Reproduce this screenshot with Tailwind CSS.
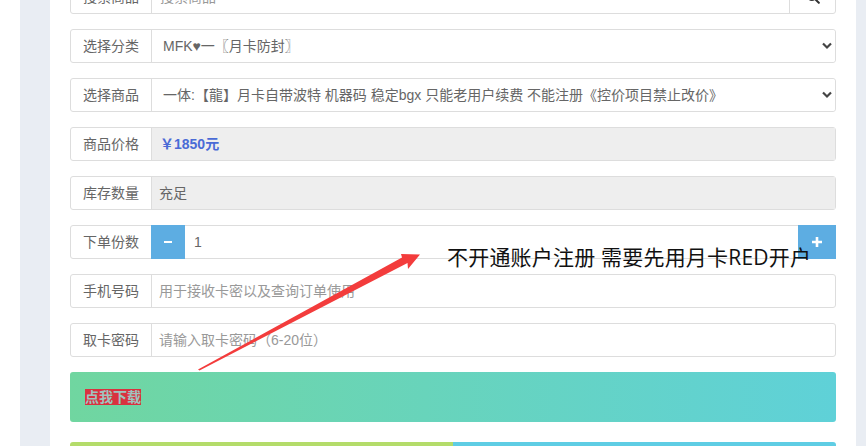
<!DOCTYPE html>
<html lang="zh-CN">

<head>
  <meta charset="UTF-8" />
  <meta name="viewport" content="width=device-width, initial-scale=1.0" />
  <title>商品下单</title>
  <script src="https://cdn.jsdelivr.net/npm/@tailwindcss/browser@4"></script>
</head>

<body class="bg-white h-[446px] overflow-hidden relative font-['Liberation_Sans','Noto_Sans_CJK_SC',sans-serif] text-sm text-[#666]">
  <div class="ml-5 mr-0 h-[446px] bg-[#e9edf3] px-[30px] pr-[10px]">
    <div class="bg-white h-[446px] px-5 overflow-hidden">
      <div class="-mt-5 flex flex-col gap-[15px]">

        <!-- Search -->
        <div class="flex h-[34px] border border-[#ddd] rounded-[3px]">
          <span class="w-[81px] shrink-0 border-r border-[#ddd] flex items-center justify-center">搜索商品</span>
          <input class="flex-1 min-w-0 px-2 outline-none placeholder:text-[#999]" placeholder="搜索商品" />
          <button class="w-[46px] border-l border-[#ddd] flex items-center justify-center">
            <svg class="w-[14px] h-[14px]" viewBox="0 0 24 24" fill="none" stroke="#333" stroke-width="3.5" stroke-linecap="round">
              <circle cx="10" cy="10" r="7" />
              <path d="M15.5 15.5 22 22" />
            </svg>
          </button>
        </div>

        <!-- Category -->
        <div class="flex h-[34px] border border-[#ddd] rounded-[3px]">
          <span class="w-[81px] shrink-0 border-r border-[#ddd] flex items-center justify-center">选择分类</span>
          <div class="flex-1 relative">
            <select class="w-full h-full appearance-none pl-[11px] outline-none bg-white rounded-[3px]">
              <option>MFK♥一〖月卡防封〗</option>
            </select>
            <svg class="absolute right-[3px] top-[12px] w-[10px] h-[8px] pointer-events-none" viewBox="0 0 10 8" fill="none" stroke="#444" stroke-width="2.2">
              <path d="M1 1.5 5 5.5 9 1.5" />
            </svg>
          </div>
        </div>

        <!-- Product -->
        <div class="flex h-[34px] border border-[#ddd] rounded-[3px]">
          <span class="w-[81px] shrink-0 border-r border-[#ddd] flex items-center justify-center">选择商品</span>
          <div class="flex-1 relative">
            <select class="w-full h-full appearance-none pl-[11px] outline-none bg-white rounded-[3px]">
              <option>一体:【龍】月卡自带波特 机器码 稳定bgx 只能老用户续费 不能注册《控价项目禁止改价》</option>
            </select>
            <svg class="absolute right-[3px] top-[12px] w-[10px] h-[8px] pointer-events-none" viewBox="0 0 10 8" fill="none" stroke="#444" stroke-width="2.2">
              <path d="M1 1.5 5 5.5 9 1.5" />
            </svg>
          </div>
        </div>

        <!-- Price -->
        <div class="flex h-[34px] border border-[#ddd] rounded-[3px]">
          <span class="w-[81px] shrink-0 border-r border-[#ddd] flex items-center justify-center">商品价格</span>
          <div class="flex-1 bg-[#eee] flex items-center pl-2 font-bold text-[#4a6bd6]">￥1850元</div>
        </div>

        <!-- Stock -->
        <div class="flex h-[34px] border border-[#ddd] rounded-[3px]">
          <span class="w-[81px] shrink-0 border-r border-[#ddd] flex items-center justify-center">库存数量</span>
          <div class="flex-1 bg-[#eee] flex items-center pl-[7px]">充足</div>
        </div>

        <!-- Quantity -->
        <div class="flex h-[34px] border border-[#ddd] rounded-[3px]">
          <span class="w-[80px] shrink-0 flex items-center justify-center">下单份数</span>
          <button class="w-[34px] -my-px bg-[#5dade2] text-white font-bold flex items-center justify-center">
            <span class="w-2 h-0.5 bg-white"></span>
          </button>
          <input class="flex-1 min-w-0 pl-[9px] outline-none" value="1" />
          <button class="w-[38px] -my-px -mr-px bg-[#5dade2] flex items-center justify-center">
            <svg class="w-[10px] h-[10px]" viewBox="0 0 10 10" fill="none" stroke="#fff" stroke-width="2.6">
              <path d="M5 0v10M0 5h10" />
            </svg>
          </button>
        </div>

        <!-- Phone -->
        <div class="flex h-[34px] border border-[#ddd] rounded-[3px]">
          <span class="w-[81px] shrink-0 border-r border-[#ddd] flex items-center justify-center">手机号码</span>
          <input class="flex-1 min-w-0 pl-[7px] outline-none placeholder:text-[#999]" placeholder="用于接收卡密以及查询订单使用" />
        </div>

        <!-- Password -->
        <div class="flex h-[34px] border border-[#ddd] rounded-[3px]">
          <span class="w-[81px] shrink-0 border-r border-[#ddd] flex items-center justify-center">取卡密码</span>
          <input class="flex-1 min-w-0 pl-[7px] outline-none placeholder:text-[#999]" placeholder="请输入取卡密码（6-20位）" />
        </div>

        <!-- Submit -->
        <button class="h-[50px] rounded-[3px] bg-linear-to-r from-[#70d6a0] to-[#5fd1d8] text-left pl-[15px] flex items-center">
          <span class="bg-[#d9323f] text-[#9fc4bf] font-bold leading-4">点我下载</span>
        </button>

        <!-- Bottom bar -->
        <div class="flex h-[30px] mt-[5px] rounded-t-[3px] overflow-hidden">
          <div class="w-[383px] bg-[#b4dc6a]"></div>
          <div class="flex-1 bg-[#5fcde4]"></div>
        </div>
      </div>
    </div>
  </div>

  <!-- Annotation over the screenshot -->
  <svg class="absolute left-0 top-0 pointer-events-none" width="866" height="446" viewBox="0 0 866 446">
    <path d="M198 369.5 402 257.5 401 254 420 254.5 408 269 407.5 263 199.5 370.5Z" fill="#f33c3c" />
  </svg>
  <div class="absolute left-[447px] top-[242px] text-[21px] leading-[30px] tracking-[0.2px] text-[#111] whitespace-nowrap font-['Open_Sans','Noto_Sans_CJK_SC',sans-serif]">不开通账户注册 需要先用月卡RED开户</div>
</body>

</html>
